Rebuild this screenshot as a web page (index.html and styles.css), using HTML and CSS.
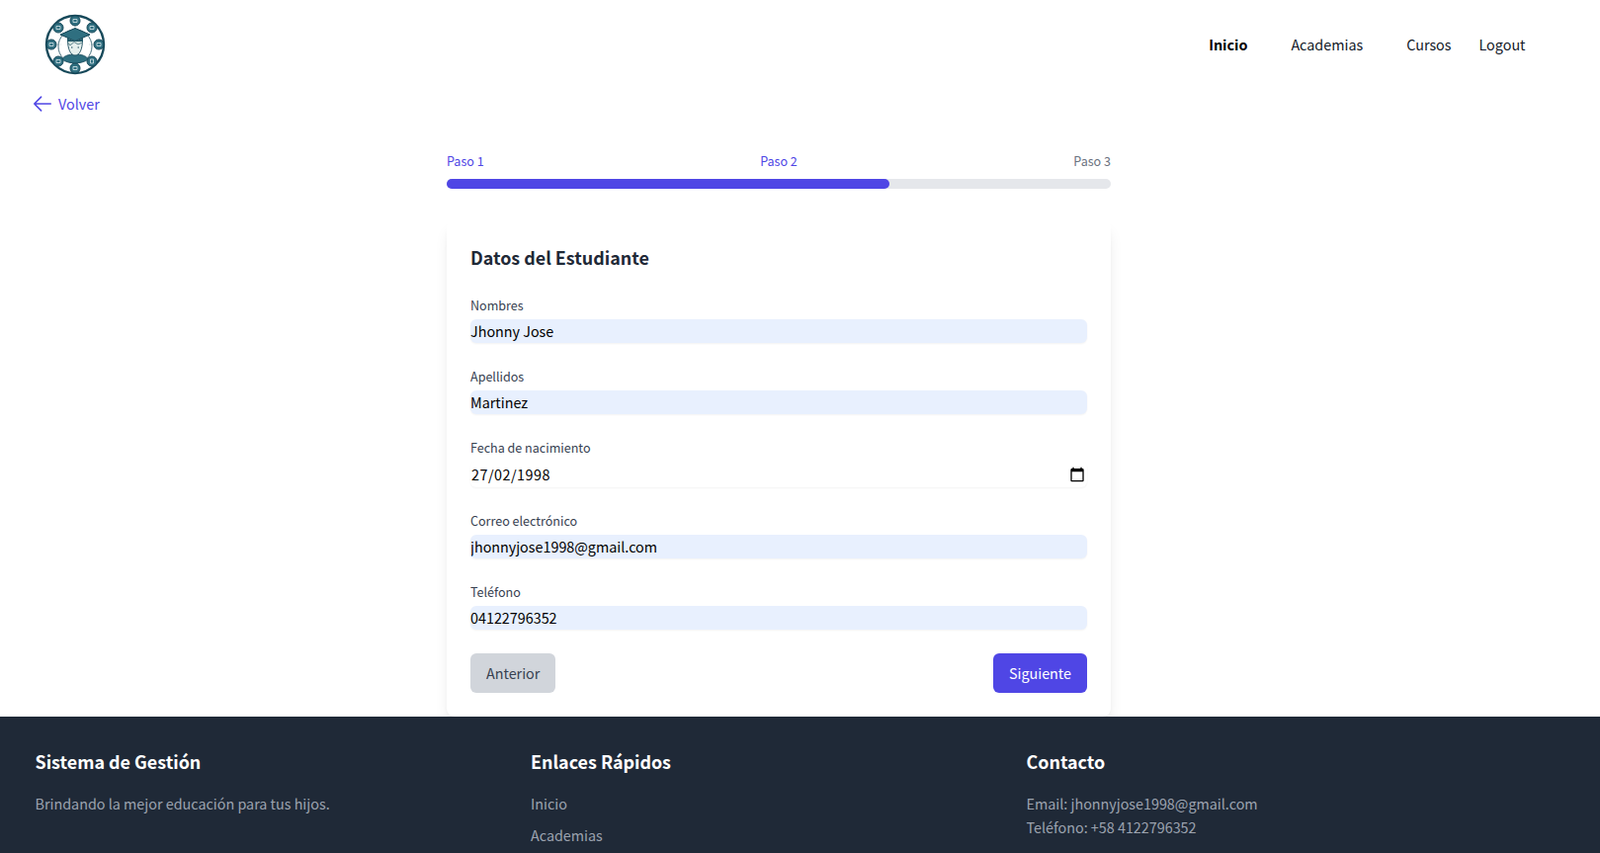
FILE: index.html
```html
<!DOCTYPE html>
<html lang="es">
<head>
  <meta charset="utf-8">
  <title>Datos del Estudiante</title>
  <link rel="stylesheet" href="styles.css">
</head>
<body>
  <header class="topbar">
    <svg class="logo" viewBox="0 0 62 62" width="62" height="62">
      <circle cx="31" cy="31" r="29" fill="#fff" stroke="#17495a" stroke-width="2.4"/>
      <circle cx="31" cy="33" r="17" fill="none" stroke="#17495a" stroke-width="0.8"/>
      <g stroke="#7d9ba5" stroke-width="0.7" stroke-dasharray="2 1.5">
        <path d="M31 11V18M45 17L41 21M49 31H45M45 45L41 43M31 49V47M17 45L21 43M13 31H17M17 17L21 21"/>
      </g>
      <g fill="#2f6f80" stroke="#17495a" stroke-width="1">
        <circle cx="31" cy="7" r="5"/>
        <circle cx="48" cy="14" r="5"/>
        <circle cx="55" cy="31" r="5"/>
        <circle cx="48" cy="48" r="5"/>
        <circle cx="31" cy="55" r="5"/>
        <circle cx="14" cy="48" r="5"/>
        <circle cx="7" cy="31" r="5"/>
        <circle cx="14" cy="14" r="5"/>
      </g>
      <g fill="none" stroke="#d7e6ea" stroke-width="0.8">
        <path d="M29 5.500H33V8.500H29ZM46 12.500H50V15.500H46ZM53 29.500H57V32.500H53ZM46.500 46H49.500V50H46.500ZM29 53.500H33V56.500H29ZM12 46.500H16V49.500H12ZM5 29.500H9V32.500H5ZM12 12.500H16V15.500H12Z"/>
      </g>
      <path d="M18 46C20 42 25 41 31 41C37 41 42 42 44 46C39 51 23 51 18 46Z" fill="#2f6f80" stroke="#17495a" stroke-width="0.8"/>
      <path d="M23.500 26C23.500 36 26.500 42 31 42C35.500 42 38.500 36 38.500 26Z" fill="#e6f0ee" stroke="#17495a" stroke-width="0.9"/>
      <path d="M23.500 29L26 32L30 28.500L34 31L38.500 29V24H23.500Z" fill="#cfe0dc" stroke="#17495a" stroke-width="0.6"/>
      <path d="M16 21L31 14.500L46 21L31 27.500Z" fill="#2f6f80" stroke="#17495a" stroke-width="1"/>
      <path d="M23 24.500V28H39V24.500L31 27.500Z" fill="#245a6a"/>
      <circle cx="27.800" cy="34" r="0.7" fill="#17495a"/>
      <circle cx="34.200" cy="34" r="0.7" fill="#17495a"/>
    </svg>
    <nav class="nav-links">
      <a class="active" href="#">Inicio</a>
      <a href="#">Academias</a>
      <a href="#">Cursos</a>
      <a class="logout" href="#">Logout</a>
    </nav>
  </header>

  <a class="back-link" href="#">
    <svg viewBox="0 0 24 24" width="22" height="22" fill="none" stroke="currentColor" stroke-width="1.7" stroke-linecap="round" stroke-linejoin="round">
      <path d="M10.500 19.500L3 12M3 12L10.500 4.500M3 12H21"/>
    </svg>
    <span>Volver</span>
  </a>

  <main class="wizard">
    <div class="steps">
      <span class="step-done">Paso 1</span>
      <span class="step-done">Paso 2</span>
      <span>Paso 3</span>
    </div>
    <div class="progress"><div class="progress-fill" style="width:66.67%"></div></div>

    <form class="card">
      <h2>Datos del Estudiante</h2>
      <div class="field">
        <label for="nombres">Nombres</label>
        <input class="filled" type="text" id="nombres" value="Jhonny Jose">
      </div>
      <div class="field">
        <label for="apellidos">Apellidos</label>
        <input class="filled" type="text" id="apellidos" value="Martinez">
      </div>
      <div class="field">
        <label for="fecha">Fecha de nacimiento</label>
        <div class="date-box">
          <input type="text" id="fecha" value="27/02/1998">
          <svg viewBox="0 0 24 24" width="16" height="16" fill="#000">
            <path d="M20 3h-1V1h-2v2H7V1H5v2H4c-1.100 0-2 .9-2 2v16c0 1.100.9 2 2 2h16c1.100 0 2-.9 2-2V5c0-1.100-.9-2-2-2zm0 18H4V8h16v13z"/>
          </svg>
        </div>
      </div>
      <div class="field">
        <label for="correo">Correo electrónico</label>
        <input class="filled" type="text" id="correo" value="jhonnyjose1998@gmail.com">
      </div>
      <div class="field">
        <label for="telefono">Teléfono</label>
        <input class="filled" type="text" id="telefono" value="04122796352">
      </div>
      <div class="buttons">
        <button type="button" class="btn-prev">Anterior</button>
        <button type="button" class="btn-next">Siguiente</button>
      </div>
    </form>
  </main>

  <footer class="footer">
    <div>
      <h3>Sistema de Gestión</h3>
      <p>Brindando la mejor educación para tus hijos.</p>
    </div>
    <div>
      <h3>Enlaces Rápidos</h3>
      <ul>
        <li><a href="#">Inicio</a></li>
        <li><a href="#">Academias</a></li>
      </ul>
    </div>
    <div>
      <h3>Contacto</h3>
      <p>Email: jhonnyjose1998@gmail.com</p>
      <p>Teléfono: +58 4122796352</p>
    </div>
  </footer>
</body>
</html>
```

FILE: styles.css
```css
* {
  box-sizing: border-box;
}

html, body {
  height: 863px;
  overflow: hidden;
}

body {
  margin: 0;
  background: #fff;
  font-family: "Noto Sans CJK SC", "Noto Sans", sans-serif;
  font-size: 14.35px;
  line-height: 24px;
  color: #1f2937;
}

a {
  text-decoration: none;
  color: inherit;
}

.topbar {
  display: flex;
  justify-content: space-between;
  align-items: center;
  height: 88px;
  padding: 2px 75.5px 0 45px;
}

.logo {
  display: block;
  filter: blur(0.35px);
}

.nav-links {
  display: flex;
  gap: 44px;
}

.nav-links a {
  color: #111827;
}

.nav-links .active {
  font-weight: 700;
  color: #000;
}

.nav-links .logout {
  margin-left: -16px;
}

.back-link {
  display: flex;
  align-items: center;
  gap: 5px;
  width: max-content;
  margin: 5px 0 0 32px;
  color: #4f46e5;
}

.wizard {
  width: 672px;
  margin: 36px 0 0 452px;
}

.steps {
  display: flex;
  justify-content: space-between;
  margin-bottom: 8px;
  font-size: 12.55px;
  line-height: 20px;
  color: #6b7280;
}

.step-done {
  color: #4f46e5;
}

.progress {
  height: 10px;
  margin-bottom: 32px;
  border-radius: 9999px;
  background: #e5e7eb;
}

.progress-fill {
  height: 10px;
  border-radius: 9999px;
  background: #4f46e5;
}

.card {
  padding: 24px;
  border-radius: 8px;
  background: #fff;
  box-shadow: 0 10px 15px -3px rgba(0, 0, 0, 0.1), 0 4px 6px -4px rgba(0, 0, 0, 0.1);
}

.card h2 {
  margin: 0 0 26px;
  font-size: 17.9px;
  line-height: 26px;
  font-weight: 700;
  color: #1f2937;
}

.field {
  margin-bottom: 24px;
}

.field label {
  display: block;
  margin-bottom: 4px;
  font-size: 12.55px;
  line-height: 20px;
  color: #374151;
}

.field input {
  display: block;
  width: 100%;
  height: 24px;
  padding: 0;
  border: 0;
  outline: 0;
  border-radius: 6px;
  background: transparent;
  font: inherit;
  color: #000;
}

.field .filled {
  background: #e8f0fe;
  box-shadow: 0 1px 2px 0 rgba(0, 0, 0, 0.05);
}

.date-box {
  display: flex;
  align-items: center;
  height: 26px;
  padding-right: 2px;
  border-radius: 6px;
  box-shadow: 0 1px 2px 0 rgba(0, 0, 0, 0.05);
}

.date-box input {
  flex: 1;
  letter-spacing: 0.5px;
  padding-left: 1px;
}

.date-box svg {
  flex: none;
}

.buttons {
  display: flex;
  justify-content: space-between;
}

.buttons button {
  height: 40px;
  padding: 0 16px;
  border: 0;
  border-radius: 6px;
  font: inherit;
}

.btn-prev {
  background: #d1d5db;
  color: #374151;
}

.btn-next {
  background: #4f46e5;
  color: #fff;
}

.footer {
  display: grid;
  grid-template-columns: repeat(3, 501.5px);
  height: 138px;
  padding: 32px 0 0 35.5px;
  background: #1f2937;
  color: #9ca3af;
}

.footer h3 {
  margin: 0 0 18px;
  font-size: 17.9px;
  line-height: 26px;
  font-weight: 700;
  color: #fff;
}

.footer p {
  margin: 0;
}

.footer ul {
  margin: 0;
  padding: 0;
  list-style: none;
}

.footer li {
  margin-bottom: 8px;
}
```
